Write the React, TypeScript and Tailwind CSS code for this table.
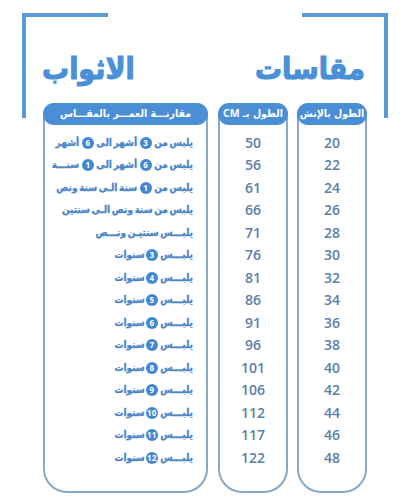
import React from "react";

const inch = [20, 22, 24, 26, 28, 30, 32, 34, 36, 38, 40, 42, 44, 46, 48];
const cm = [50, 56, 61, 66, 71, 76, 81, 86, 91, 96, 101, 106, 112, 117, 122];

const C = ({ n }: { n: number }) => (
  <span className="inline-flex items-center justify-center w-[12px] h-[12px] rounded-full bg-[#4386d2] text-white text-[8px] font-bold leading-none mx-[1px] align-middle [-webkit-text-stroke:0px] [font-family:'Open_Sans',sans-serif]">
    {n}
  </span>
);

const ageRows: React.ReactNode[] = [
  <>يلبس من <C n={3} /> أشهر الى <C n={6} /> أشهر</>,
  <>يلبس من <C n={6} /> أشهر الى <C n={1} /> سنـــة</>,
  <>يلبس من <C n={1} /> سنة الـى سنة ونص</>,
  <>يلبس من سنة ونص الـى سنتين</>,
  <>يلبـــس سنتيـن ونـــص</>,
  ...[3, 4, 5, 6, 7, 8, 9, 10, 11, 12].map((n) => (
    <>يلبـــس <C n={n} />سنوات</>
  )),
];

const Column = ({
  w,
  title,
  children,
}: {
  w: string;
  title: React.ReactNode;
  children: React.ReactNode;
}) => (
  <div className={`${w} h-[390px] border-2 border-[#86a9c7] rounded-t-[12px] rounded-b-[24px] flex flex-col`}>
    <div className="-mx-[2px] -mt-[2px] h-[22px] rounded-[11px] bg-[#4a8fd6] flex items-center justify-center text-white text-[10.5px] font-bold whitespace-nowrap [font-family:'DejaVu_Sans_Condensed','DejaVu_Sans',sans-serif]" dir="rtl">
      {title}
    </div>
    <div className="pt-[6px] flex flex-col">{children}</div>
  </div>
);

export default function App() {
  return (
    <div className="w-[410px] h-[500px] bg-white grid overflow-hidden">
      <div className="[grid-area:1/1] flex justify-between items-start px-[22px] pt-[13px]">
        <div className="w-[86px] h-[105px] border-l-4 border-t-4 border-[#5b9bd5]" />
        <div className="w-[86px] h-[105px] border-r-4 border-t-4 border-[#5b9bd5]" />
      </div>
      <div className="[grid-area:1/1] flex flex-col">
        <div className="flex justify-between items-center h-[36px] mt-[51px] pl-[42px] pr-[45px] text-[#4a90d9] font-bold text-[30px] leading-none [-webkit-text-stroke:1px_#4a90d9] [font-family:'DejaVu_Sans_Condensed','DejaVu_Sans',sans-serif]">
          <span dir="rtl">الاثواب</span>
          <span dir="rtl">مقاسات</span>
        </div>
        <div className="flex mt-[16px] pl-[43px]">
          <Column w="w-[165px]" title="مقارنـــة العمـــر بالمقـــاس">
            {ageRows.map((r, i) => (
              <div
                key={i}
                dir="rtl"
                className="h-[22.5px] flex items-center pr-[13px] text-[10px] font-bold text-[#4a86c8] whitespace-nowrap [word-spacing:-1.5px] [-webkit-text-stroke:0.3px_#4a86c8] [font-family:'DejaVu_Sans_Condensed','DejaVu_Sans',sans-serif]"
              >
                <span>{r}</span>
              </div>
            ))}
          </Column>
          <div className="w-[10px]" />
          <Column w="w-[70px]" title={<>الطول بـ{"\u00a0"}<span className="[font-family:'Open_Sans',sans-serif]">CM</span></>}>
            {cm.map((v) => (
              <div key={v} className="h-[22.5px] flex items-center justify-center text-[14px] font-semibold text-[#5a80a8] [font-family:'Open_Sans',sans-serif]">
                {v}
              </div>
            ))}
          </Column>
          <div className="w-[9px]" />
          <Column w="w-[70px]" title="الطول بالإنش">
            {inch.map((v) => (
              <div key={v} className="h-[22.5px] flex items-center justify-center text-[14px] font-semibold text-[#5a80a8] [font-family:'Open_Sans',sans-serif]">
                {v}
              </div>
            ))}
          </Column>
        </div>
      </div>
    </div>
  );
}
